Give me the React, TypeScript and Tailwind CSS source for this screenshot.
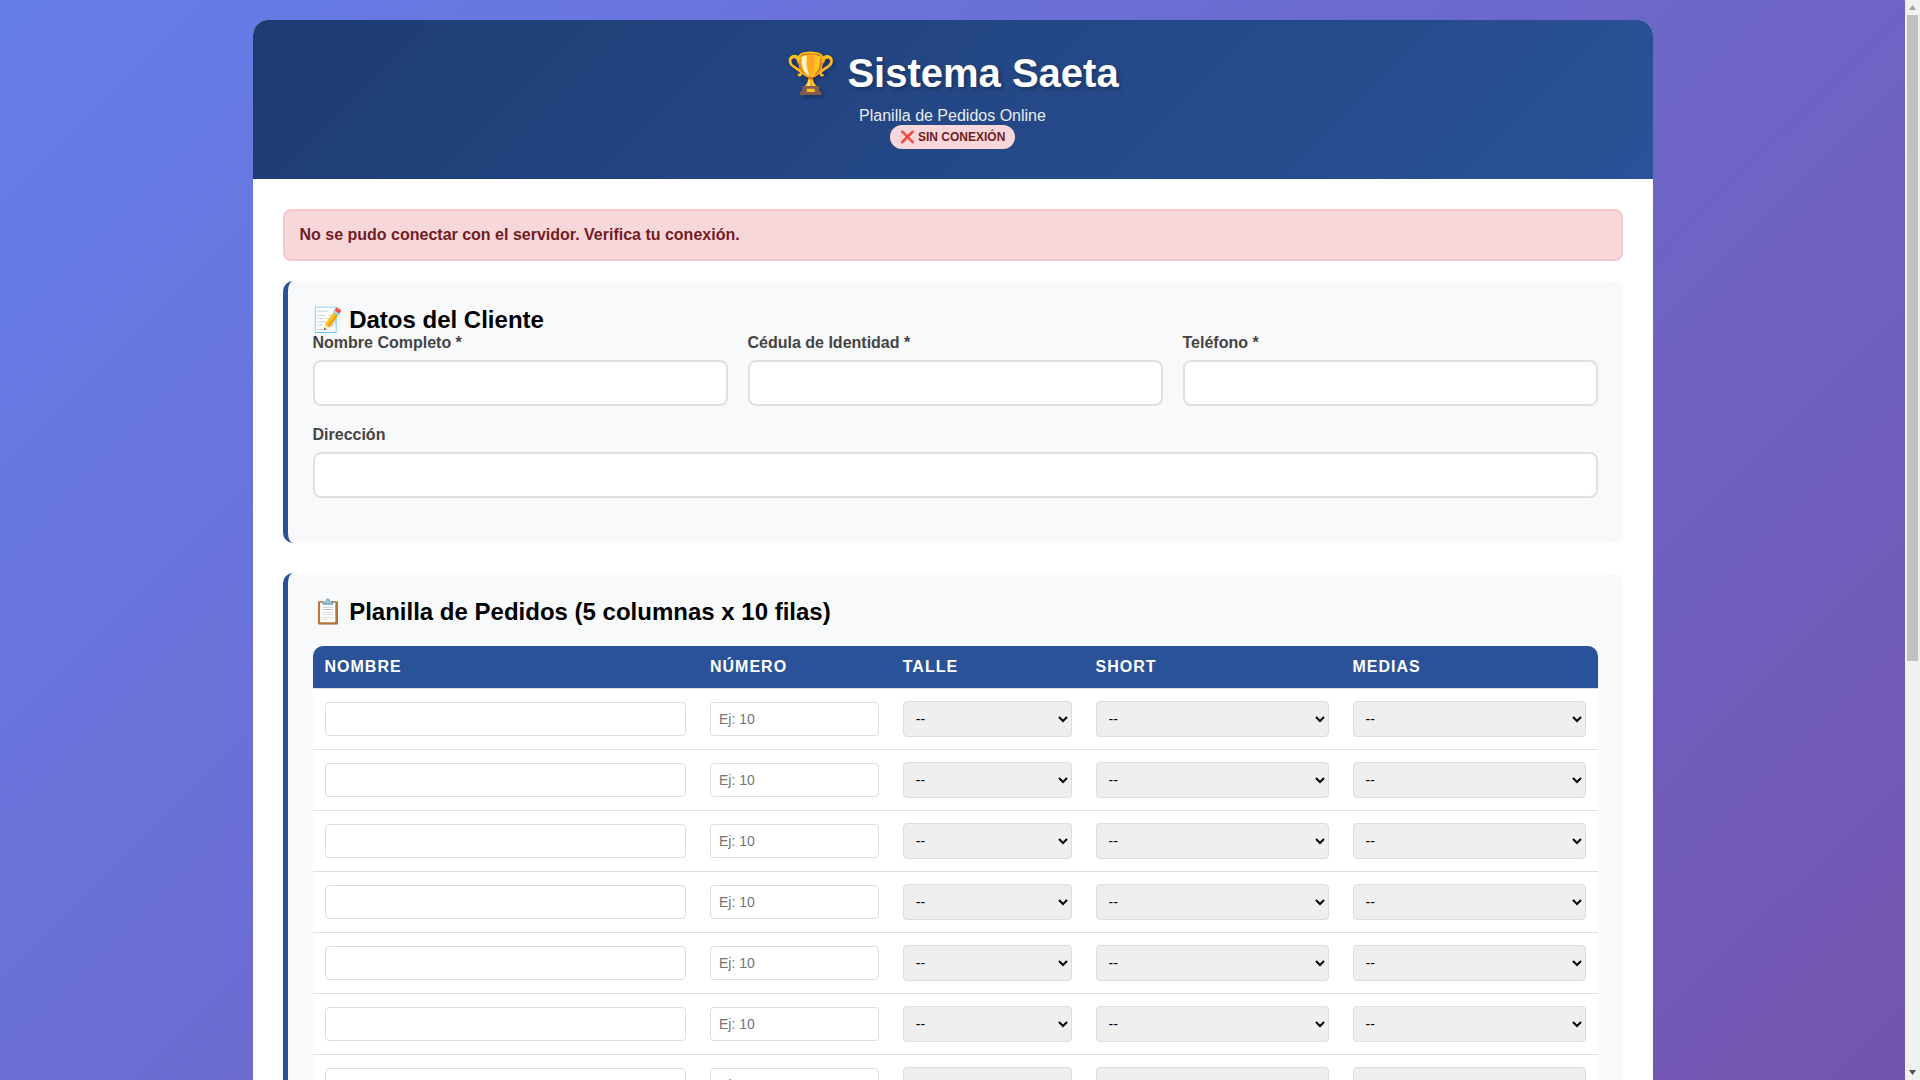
import type { ReactNode } from "react";

const rows = Array.from({ length: 10 }, (_, i) => i);

function Field({ label, className = "" }: { label: string; className?: string }) {
    return (
        <div className={`mb-5 ${className}`}>
            <label className="mb-2 block text-[16px] leading-[18px] font-bold text-[#444]">
                {label}
            </label>
            <input
                type="text"
                className="box-border block h-[46px] w-full rounded-lg border-2 border-[#e0e0e0] bg-white px-3 text-[16px]"
            />
        </div>
    );
}

function Section({ children, className = "" }: { children: ReactNode; className?: string }) {
    return (
        <section
            className={`rounded-[10px] border-l-[5px] border-[#2a5298] bg-[#f8f9fa] p-[25px] ${className}`}
        >
            {children}
        </section>
    );
}

function SizeSelect() {
    return (
        <select className="box-border block h-9 w-full rounded border border-[#ddd] bg-[#efefef] p-2 text-[14px] text-black">
            <option>--</option>
        </select>
    );
}

// the page scrollbar from the reference, headless chrome does not paint a real one
function ScrollStrip() {
    return (
        <div className="flex w-[15px] shrink-0 flex-col items-center bg-[#f1f1f1]">
            <svg viewBox="0 0 15 15" className="h-[15px] w-[15px] shrink-0">
                <polygon points="7.5,5 11,10 4,10" fill="#a3a3a3" />
            </svg>
            <div className="h-[646px] w-[11px] shrink-0 bg-[#c1c1c1]" />
            <div className="flex-1" />
            <svg viewBox="0 0 15 15" className="h-[15px] w-[15px] shrink-0">
                <polygon points="4,5 11,5 7.5,10" fill="#505050" />
            </svg>
        </div>
    );
}

const thClass = "p-3 text-left text-[16px] leading-[18px] font-bold tracking-[1px] text-white uppercase";

export default function App() {
    return (
        <div className="flex h-screen font-['Liberation_Sans',sans-serif]">
            <div className="min-w-0 flex-1 overflow-y-auto">
                <div className="bg-[linear-gradient(135deg,#667eea_0%,#764ba2_100%)] p-5">
                    <div className="mx-auto min-h-[1715px] max-w-[1400px] overflow-hidden rounded-[15px] bg-white">
                        <header className="h-[159px] bg-[linear-gradient(135deg,#1e3c72_0%,#2a5298_100%)] p-[30px] text-center text-white">
                            <h1 className="mb-2.5 h-[47px] text-[40px] leading-[46px] font-bold [text-shadow:2px_2px_4px_rgba(0,0,0,0.3)]">
                                🏆 Sistema Saeta
                            </h1>
                            <p className="text-[16px] leading-[18px] opacity-90">Planilla de Pedidos Online</p>
                            <div className="flex justify-center">
                                <span className="rounded-[20px] bg-[#f8d7da] px-2.5 py-[5px] text-[12px] leading-[14px] font-bold text-[#721c24]">
                                    ❌ SIN CONEXIÓN
                                </span>
                            </div>
                        </header>

                        <main className="p-[30px]">
                            <div className="mb-5 rounded-lg border-2 border-[#f5c6cb] bg-[#f8d7da] p-[15px] text-[16px] leading-[18px] font-bold text-[#721c24]">
                                No se pudo conectar con el servidor. Verifica tu conexión.
                            </div>

                            <Section className="mb-[30px]">
                                <h2 className="h-7 text-[24px] leading-7 font-bold text-black">📝 Datos del Cliente</h2>
                                <div className="grid grid-cols-3 gap-x-5">
                                    <Field label="Nombre Completo *" />
                                    <Field label="Cédula de Identidad *" />
                                    <Field label="Teléfono *" />
                                    <Field label="Dirección" className="col-span-3" />
                                </div>
                            </Section>

                            <Section>
                                <h2 className="mb-5 h-7 text-[24px] leading-7 font-bold text-black">
                                    📋 Planilla de Pedidos (5 columnas x 10 filas)
                                </h2>
                                <table className="w-full table-fixed border-collapse bg-white">
                                    <thead>
                                        <tr className="border-b border-[#e0e0e0] bg-[#2a5298]">
                                            <th className={`${thClass} w-[30%] rounded-tl-[10px]`}>Nombre</th>
                                            <th className={`${thClass} w-[15%]`}>Número</th>
                                            <th className={`${thClass} w-[15%]`}>Talle</th>
                                            <th className={`${thClass} w-[20%]`}>Short</th>
                                            <th className={`${thClass} w-[20%] rounded-tr-[10px]`}>Medias</th>
                                        </tr>
                                    </thead>
                                    <tbody>
                                        {rows.map((row) => (
                                            <tr key={row} className="border-b border-[#e0e0e0]">
                                                <td className="p-3">
                                                    <input
                                                        type="text"
                                                        className="box-border block h-[34px] w-full rounded border border-[#ddd] bg-white p-2 text-[14px]"
                                                    />
                                                </td>
                                                <td className="p-3">
                                                    <input
                                                        type="text"
                                                        placeholder="Ej: 10"
                                                        className="box-border block h-[34px] w-full rounded border border-[#ddd] bg-white p-2 text-[14px] placeholder:text-[#757575]"
                                                    />
                                                </td>
                                                <td className="p-3">
                                                    <SizeSelect />
                                                </td>
                                                <td className="p-3">
                                                    <SizeSelect />
                                                </td>
                                                <td className="p-3">
                                                    <SizeSelect />
                                                </td>
                                            </tr>
                                        ))}
                                    </tbody>
                                </table>
                            </Section>
                        </main>
                    </div>
                </div>
            </div>
            <ScrollStrip />
        </div>
    );
}
